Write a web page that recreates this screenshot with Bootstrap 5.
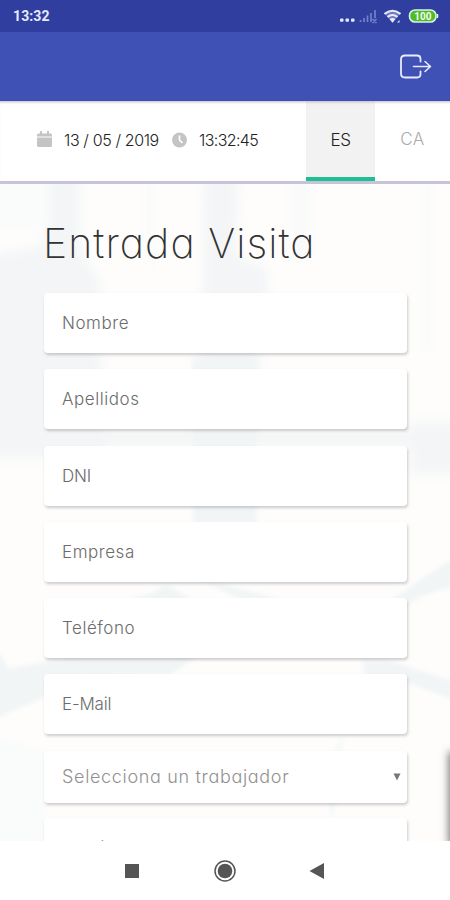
<!DOCTYPE html>
<html lang="es">
<head>
<meta charset="utf-8">
<meta name="viewport" content="width=device-width, initial-scale=1">
<title>Entrada Visita</title>
<link href="https://cdn.jsdelivr.net/npm/bootstrap@5.3.0/dist/css/bootstrap.min.css" rel="stylesheet">
<style>
  body { font-family: Inter, "Open Sans", sans-serif; font-feature-settings: "cv11" 1; background: #fefefe; }
  .screen { height: 900px; }
  .status-bar { height: 32px; background: #303f9f; color: #e6eafa; padding: 0 11px 0 13px; }
  .status-time { font: 700 14px Roboto, sans-serif; letter-spacing: .1px; }
  .app-bar { height: 69px; background: #3f51b5; padding-right: 18px; border-bottom: 1px solid #3445a6; }
  .info-bar { height: 83px; background: #fff; border-bottom: 3px solid #c9c3da; box-shadow: inset 0 3px 3px -2px #bbb7ca, 0 1px 2px #e8e5ec; }
  .stamp { padding: 0 0 3px 37px; width: 306px; font-size: 16px; font-weight: 300; color: #222; }
  .stamp-date { margin-left: 12px; width: 96px; letter-spacing: -.38px; }
  .stamp-time { margin-left: 12px; letter-spacing: -.62px; }
  .lang { font-size: 17px; font-weight: 300; color: #aaa; width: 75px; padding-bottom: 3px; letter-spacing: .5px; }
  .lang-on { width: 69px; color: #222; background: #f2f2f2; border-bottom: 4px solid #1fbf92; box-shadow: inset 0 3px 3px -2px #bbb7ca; padding: 3px 0 0; letter-spacing: -.5px; }
  .form-area { z-index: 1; padding: 31px 43px 0 44px; }
  .page-title { font-size: 41px; font-weight: 200; line-height: 56px; letter-spacing: 1.05px; color: #333; margin: 0 0 22px -1px; }
  .field, .field:focus { height: 60px; flex: none; border: 0; border-radius: 4px; padding: 0 17px 0 18px; background-color: #fff; font-size: 17px; font-weight: 300; letter-spacing: .55px; color: #555; box-shadow: 1px 2px 3px rgba(60, 60, 70, .25); }
  .field::placeholder { color: #6c6c6c; opacity: 1; }
  .field-list { gap: 16.3px; }
  .field-tight { letter-spacing: -.2px; }
  .pick { height: 52px; color: #919191; padding-right: 6px; font-size: 18px; letter-spacing: .67px; }
  .field.field-last { margin-top: -1.3px; letter-spacing: .3px; }
  .sys-nav { height: 59px; background: #fff; z-index: 2; }
  .drawer-edge { right: -9px; top: 570px; width: 8px; height: 90px; box-shadow: 0 0 8px 2px rgba(50, 50, 50, .7); z-index: 1; }
</style>
<script src="https://cdn.jsdelivr.net/npm/bootstrap@5.3.0/dist/js/bootstrap.bundle.min.js"></script>
</head>
<body>
<div class="screen d-flex flex-column overflow-hidden">
  <div class="status-bar d-flex align-items-center justify-content-between flex-shrink-0">
    <span class="status-time">13:32</span>
    <svg width="101" height="20" viewBox="338 6 101 20">
      <g fill="#e6eafa"><rect x="340" y="18.5" width="3.5" height="3.2" rx="1"/><rect x="345.5" y="18.5" width="3.5" height="3.2" rx="1"/><rect x="351" y="18.5" width="3.5" height="3.2" rx="1"/></g>
      <path d="M360.500 22v-2M364 22v-4M367.500 22v-6.500M371 22v-9M375 18v-8M372.500 19l4 4M376.500 19l-4 4" stroke="#7480c8" stroke-width="1.700" fill="none"/>
      <path d="M384.500 14q8-6.500 16 0M387.500 17q5-4 10 0" stroke="#e6eafa" stroke-width="2.100" fill="none"/>
      <path d="M384 12.700q8.500-6 17 0l-8.500 10z" fill="#e6eafa" opacity=".35"/>
      <path d="M389.500 19q3-2 6 0l-3 3.700z" fill="#e6eafa"/><path d="M397 22.500l2.500-2.500v2.500z" fill="#e6eafa"/>
      <rect x="409.500" y="10" width="26.500" height="12" rx="5.500" fill="#4dbd2b" stroke="#dff0e6" stroke-width="1.600"/><path d="M437.500 14v4" stroke="#dff0e6" stroke-width="1.500"/>
      <text x="422.800" y="19.700" text-anchor="middle" font-family="Roboto, sans-serif" font-weight="700" font-size="10" fill="#f4fff0">100</text>
    </svg>
  </div>
  <header class="app-bar d-flex align-items-center justify-content-end flex-shrink-0">
    <svg width="34" height="28" viewBox="399 52 34 28" fill="none" stroke="#e9ecfb" stroke-linecap="round" stroke-linejoin="round">
      <path d="M421.500 61.500V59q0-3.500-3.500-3.500H406q-4 0-4 4V73.500q0 4 4 4h12q3.500 0 3.500-3.500V71.500" stroke-width="1.800"/>
      <path d="M414.500 66.500H431M426 61.500l5.500 5-5.500 5" stroke-width="1.600"/>
    </svg>
  </header>
  <div class="info-bar d-flex flex-shrink-0 position-relative">
    <div class="stamp d-flex align-items-center text-nowrap">
      <svg width="15" height="17" viewBox="0 0 15 17" fill="#c4c4c4"><path d="M3 0h2v2.500h5V0h2v2.500h1.500Q15 2.500 15 4v1.500H0V4q0-1.500 1.500-1.500H3zM0 6.500h15v8q0 1.500-1.500 1.500h-12Q0 16 0 14.500z"/></svg>
      <span class="stamp-date">13 / 05 / 2019</span>
      <svg class="ms-2 ps-1" width="19" height="16" viewBox="0 0 15 16"><circle cx="7.500" cy="8" r="7.500" fill="#c4c4c4"/><path d="M7.500 3.500V8l3 3" stroke="#fff" stroke-width="1.700" fill="none"/></svg>
      <span class="stamp-time">13:32:45</span>
    </div>
    <div class="lang lang-on d-flex align-items-center justify-content-center">ES</div>
    <div class="lang d-flex align-items-center justify-content-center">CA</div>
  </div>
  <main class="flex-grow-1 position-relative overflow-hidden">
    <svg class="position-absolute top-0 start-0" width="450" height="657" viewBox="0 184 450 657">
      <defs><filter id="soft" x="-20%" y="-20%" width="140%" height="140%"><feGaussianBlur stdDeviation="6"/></filter><filter id="edge"><feGaussianBlur stdDeviation="2"/></filter></defs>
      <rect y="184" width="450" height="658" fill="#fefdfc"/>
      <g filter="url(#soft)" fill="#f3f5f6">
        <path d="M-20 258L45 245 46 170h34v80l19 30 6 178H-20z"/>
        <path d="M203 170h36l-3 85 32 15v30l-10 73h-64l10-98z"/>
        <path d="M290 170h20v90h-20zM145 170h8v100h-8zM424 170h8v185h-8z" fill="#f9fafa"/>
        <path d="M50 431h370v15H50zM411 422h60v52h-60z"/>
        <path d="M-20 170h70v60H-20z" fill="#fafbfb"/>
      </g>
      <g filter="url(#edge)" fill="#f2f5f6">
        <path d="M193 360h64v165h-64z"/>
        <path d="M125 599l28-6q14-15 27 0l9 3v5zM200 580q55 12 86 20h-45zM390 600L465 550v34q-50 10-68 30z"/>
        <path d="M-9 646q10 8 18 22l35-6 45-8 111 0-30 22-90 2-45 24-53 22z"/>
        <path d="M363 660h25l77 25v20l-70-27h-32z"/>
        <path d="M345 735q-7 15 0 30l-14 60q-10-70 14-90z" fill="#f6f8f8"/>
        <path d="M-9 735l54 15v100H-9z" fill="#fafbfb"/>
      </g>
    </svg>
    <div class="form-area position-relative">
      <h1 class="page-title text-nowrap">Entrada Visita</h1>
      <form class="field-list d-flex flex-column">
        <input class="form-control field" placeholder="Nombre" aria-label="Nombre">
        <input class="form-control field" placeholder="Apellidos" aria-label="Apellidos">
        <input class="form-control field field-tight" placeholder="DNI" aria-label="DNI">
        <input class="form-control field" placeholder="Empresa" aria-label="Empresa">
        <input class="form-control field" placeholder="Teléfono" aria-label="Teléfono">
        <input class="form-control field field-tight" placeholder="E-Mail" aria-label="E-Mail">
        <div class="field pick d-flex align-items-center justify-content-between" role="button">
          <span>Selecciona un trabajador</span>
          <svg width="8" height="8" viewBox="0 0 8 8"><path d="M.5.500h7L4 7.500z" fill="#777"/></svg>
        </div>
        <input class="form-control field field-last" placeholder="Matrícula" aria-label="Matrícula">
      </form>
    </div>
    <div class="drawer-edge position-absolute"></div>
  </main>
  <nav class="sys-nav d-flex justify-content-center flex-shrink-0">
    <svg width="210" height="59" viewBox="120 841 210 59" fill="#555">
      <rect x="125" y="864" width="14" height="14"/>
      <circle cx="225" cy="871" r="10" fill="none" stroke="#555" stroke-width="1.500"/><circle cx="225" cy="871" r="7.300"/>
      <path d="M309.500 871l14.500-8v16z"/>
    </svg>
  </nav>
</div>
</body>
</html>
